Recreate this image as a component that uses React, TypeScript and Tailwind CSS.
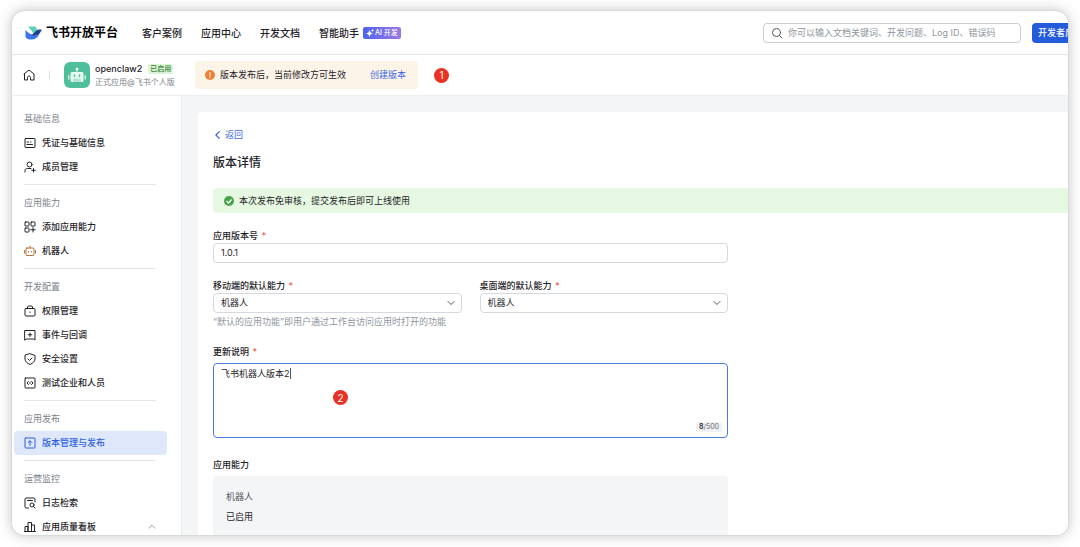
import type { ReactNode } from 'react';

type MenuItem = { label: string; icon: ReactNode; active?: boolean; expandable?: boolean };
type MenuGroup = { title: string; items: MenuItem[] };

function Icon({ children, className = '' }: { children: ReactNode; className?: string }) {
  return (
    <svg
      viewBox="0 0 24 24"
      fill="none"
      stroke="currentColor"
      strokeWidth="2"
      strokeLinecap="round"
      strokeLinejoin="round"
      aria-hidden="true"
      className={`size-3 shrink-0 ${className}`}
    >
      {children}
    </svg>
  );
}

const menu: MenuGroup[] = [
  {
    title: '基础信息',
    items: [
      { label: '凭证与基础信息', icon: <Icon><rect x="2" y="3" width="20" height="18" rx="1" /><path d="M6 10h3M6 15h11M13 10h1" /></Icon> },
      { label: '成员管理', icon: <Icon><circle cx="11" cy="7" r="5" /><path d="M2 22v-3c0-3 2-4 5-4h7M19 15v7M15.500 18.500h7" /></Icon> },
    ],
  },
  {
    title: '应用能力',
    items: [
      { label: '添加应用能力', icon: <Icon><rect x="2" y="2" width="8" height="8" rx="1" /><rect x="14" y="2" width="8" height="8" rx="1" /><rect x="2" y="14" width="8" height="8" rx="1" /><path d="M18 13v9M13.500 17.500h9" /></Icon> },
      { label: '机器人', icon: <Icon className="text-[#b4713a]"><rect x="4" y="6" width="16" height="15" rx="2" /><path d="M12 2v4M1 11v5M23 11v5M9 13v1M15 13v1" /></Icon> },
    ],
  },
  {
    title: '开发配置',
    items: [
      { label: '权限管理', icon: <Icon><rect x="2" y="7" width="20" height="15" rx="2" /><path d="M7 7V4c0-1 1-2 2-2h6c1 0 2 1 2 2v3M12 14v1" /></Icon> },
      { label: '事件与回调', icon: <Icon><path d="M2 3h20v19l-3-2H5l-3 2zM12 8v7M8.500 11.500h7" /></Icon> },
      { label: '安全设置', icon: <Icon><path d="M12 1.500l10 3.500v7c0 5-4 8-10 11C6 20 2 17 2 12V5zM8 12l3 3 5-5" /></Icon> },
      { label: '测试企业和人员', icon: <Icon><rect x="2" y="2" width="20" height="20" rx="1" /><path d="M9 9l-3 3 3 3M15 9l3 3-3 3M12 11v2" /></Icon> },
    ],
  },
  {
    title: '应用发布',
    items: [
      { label: '版本管理与发布', active: true, icon: <Icon><rect x="2" y="2" width="20" height="20" rx="1" /><path d="M12 17V8M8.500 11L12 7.500l3.500 3.500" /></Icon> },
    ],
  },
  {
    title: '运营监控',
    items: [
      { label: '日志检索', icon: <Icon><path d="M9 22H4c-1 0-2-1-2-2V4c0-1 1-2 2-2h16c1 0 2 1 2 2v6M7 7h10" /><circle cx="16" cy="16" r="4" /><path d="M19 19l3 3" /></Icon> },
      { label: '应用质量看板', expandable: true, icon: <Icon><path d="M2 21V11h6v10M8 21V3h7v18M15 21V8h6v13M1 21h22" /></Icon> },
    ],
  },
];

function Logo() {
  return (
    <svg viewBox="0 0 34 28" className="h-[14px] w-[17px] shrink-0" aria-hidden="true">
      <path d="M6 1h14c3 2 5 6 5 10l-8 5C14 10 10 5 6 1z" fill="#5fcfb8" />
      <path d="M1 8c6 7 13 11 21 11 3 0 5-2 7-4-3 8-8 12-16 12C8 27 3 26 1 22z" fill="#3f74f2" />
      <path d="M34 8c-7-2-11 0-14 4-3 3-5 5-8 6 8 3 14 1 17-3 2-3 3-5 5-7z" fill="#1c3f96" />
    </svg>
  );
}

function BotAvatar() {
  return (
    <div className="flex size-[26px] shrink-0 items-center justify-center rounded-md bg-[#4fbf9b]">
      <svg viewBox="0 0 36 34" className="h-[17px] w-[18px]" aria-hidden="true">
        <path d="M18 10V5" stroke="#e9faf3" strokeWidth="2" />
        <circle cx="18" cy="4" r="3" fill="#e9faf3" />
        <rect x="5" y="10" width="26" height="20" rx="3" fill="#e9faf3" />
        <path d="M1.500 17v7M34.500 17v7" stroke="#e9faf3" strokeWidth="2.500" strokeLinecap="round" />
        <path d="M13 16v3M23 16v3" stroke="#4fbf9b" strokeWidth="3" strokeLinecap="round" />
        <rect x="10" y="23" width="16" height="7" fill="#b5e6d5" />
      </svg>
    </div>
  );
}

function Step({ n, className = '' }: { n: number; className?: string }) {
  return (
    <span className={`flex size-[15px] items-center justify-center rounded-full bg-[#e93223] text-[10px] leading-none text-white ${className}`}>
      {n}
    </span>
  );
}

function Label({ htmlFor, children }: { htmlFor: string; children: ReactNode }) {
  return (
    <label htmlFor={htmlFor} className="block h-[14px] font-medium">
      {children} <span className="ml-px text-[#f0574c]">*</span>
    </label>
  );
}

function SelectField({ id, label }: { id: string; label: string }) {
  return (
    <div>
      <Label htmlFor={id}>{label}</Label>
      <div className="relative">
        <select id={id} className="block h-5 w-full appearance-none rounded border border-[#d5d8dc] bg-white px-[7px] leading-[14px] outline-none">
          <option>机器人</option>
        </select>
        <Icon className="pointer-events-none absolute top-1 right-[5px] text-[#51565d]"><path d="M6 9l6 6 6-6" /></Icon>
      </div>
    </div>
  );
}

function Header() {
  return (
    <header className="flex h-11 shrink-0 items-center border-b border-[#e3e5e8] pt-px pl-[13px]">
      <a href="#" className="flex w-[117px] shrink-0 items-center gap-1 text-[12px] font-bold whitespace-nowrap text-black">
        <Logo />
        飞书开放平台
      </a>
      <nav className="flex shrink-0 items-center gap-[19px] text-[10px] font-medium whitespace-nowrap">
        <a href="#">客户案例</a>
        <a href="#">应用中心</a>
        <a href="#">开发文档</a>
        <a href="#" className="flex items-center gap-1">
          智能助手
          <span className="flex h-3 items-center gap-px rounded-[2px] bg-linear-to-r from-[#4c62f0] to-[#9a78e0] px-[3px] text-[7px] text-white">
            <svg viewBox="0 0 16 16" className="size-2" fill="currentColor" aria-hidden="true">
              <path d="M7 2l2 5 5 2-5 2-2 5-2-5-5-2 5-2zM13 0l1 2 2 1-2 1-1 2-1-2-2-1 2-1z" />
            </svg>
            AI 开发
          </span>
        </a>
      </nav>
      <div className="-mr-[21px] ml-auto flex h-5 shrink-0 gap-[11px]">
        <label className="flex w-[258px] items-center gap-[5px] rounded border border-[#c9cdd2] px-[7px]">
          <Icon className="text-[#51565d]"><circle cx="11" cy="11" r="8" /><path d="M17 17l5 5" /></Icon>
          <input
            type="search"
            aria-label="搜索"
            placeholder="你可以输入文档关键词、开发问题、Log ID、错误码"
            className="min-w-0 flex-1 bg-transparent outline-none placeholder:text-[#8f959e]"
          />
        </label>
        <button type="button" className="rounded bg-[#245bdb] px-[6px] font-medium whitespace-nowrap text-white">
          开发者后台
        </button>
      </div>
    </header>
  );
}

function AppBar() {
  return (
    <div className="flex h-[41px] shrink-0 items-center border-b border-[#eceef0] pl-[11px] whitespace-nowrap">
      <a href="#" aria-label="首页">
        <Icon><path d="M2 10L12 2l10 8v12h-7v-5c0-4-6-4-6 0v5H3V10" /></Icon>
      </a>
      <span className="mx-[14px] h-2 w-px bg-[#dee0e3]" />
      <BotAvatar />
      <div className="ml-[5px] w-[100px]">
        <div className="flex h-[13px] items-center gap-[6px]">
          <span className="text-[9px] font-medium">openclaw2</span>
          <span className="rounded-[2px] bg-[#dbf3d6] px-[2px] text-[7px] leading-[10px] font-medium text-[#39873a]">已启用</span>
        </div>
        <div className="h-[13px] text-[8px] leading-[14px] text-[#7c828b]">正式应用@飞书个人版</div>
      </div>
      <div role="status" className="flex h-7 items-center rounded bg-[#fdf4e8] px-[10px]">
        <svg viewBox="0 0 20 20" className="mr-[5px] size-[10px]" aria-hidden="true">
          <circle cx="10" cy="10" r="10" fill="#ee8135" />
          <path d="M10 5v6M10 14v1" stroke="#fff" strokeWidth="2" strokeLinecap="round" />
        </svg>
        版本发布后，当前修改方可生效
        <a href="#" className="mr-[2px] ml-6 text-[#3b69dd]">创建版本</a>
      </div>
      <Step n={1} className="ml-4" />
    </div>
  );
}

function Sidebar() {
  return (
    <nav className="w-[170px] shrink-0 border-r border-[#eaecee] pt-[11px] pr-[14px] pl-[2px]">
      {menu.map((group) => (
        <section key={group.title} className="group">
          <h2 className="flex h-6 items-center pl-[10px] text-[#7c828b]">{group.title}</h2>
          <ul>
            {group.items.map((item) => (
              <li key={item.label}>
                <a
                  href="#"
                  aria-current={item.active ? 'page' : undefined}
                  className={`flex h-6 items-center gap-[6px] rounded px-[10px] font-medium ${item.active ? 'bg-[#dfe7fb] text-[#2d5fdc]' : ''}`}
                >
                  {item.icon}
                  {item.label}
                  {item.expandable && <Icon className="ml-auto size-[10px] text-[#7c828b]"><path d="M5 15l7-7 7 7" /></Icon>}
                </a>
              </li>
            ))}
          </ul>
          <hr className="mt-[5px] mr-[11px] mb-[6px] ml-[10px] border-[#e3e5e8] group-last:hidden" />
        </section>
      ))}
    </nav>
  );
}

function VersionForm() {
  return (
    <form className="w-[515px] max-w-full pt-4">
      <div>
        <Label htmlFor="version">应用版本号</Label>
        <input id="version" defaultValue="1.0.1" className="block h-5 w-full rounded border border-[#d5d8dc] px-[7px] pb-px outline-none" />
      </div>

      <div className="mt-4 grid grid-cols-2 gap-[18px]">
        <SelectField id="mobile" label="移动端的默认能力" />
        <SelectField id="desktop" label="桌面端的默认能力" />
      </div>
      <p className="mt-[2px] h-[14px] text-[#8f959e]">“默认的应用功能”即用户通过工作台访问应用时打开的功能</p>

      <div className="mt-4">
        <Label htmlFor="notes">更新说明</Label>
        <div className="relative mt-1">
          <textarea
            id="notes"
            defaultValue="飞书机器人版本2"
            className="block h-[75px] w-full resize-none rounded border border-[#4e7be0] px-[7px] py-[3px] leading-[14px] outline-none"
          />
          <span className="absolute top-[5px] left-[77px] h-[11px] w-px bg-[#51565d]" />
          <span className="absolute right-[6px] bottom-[6px] rounded-[2px] bg-[#f0f1f2] px-[3px] text-[7px] leading-[10px] text-[#646a73]">
            <b className="font-semibold text-[#1f2329]">8</b>/500
          </span>
          <Step n={2} className="absolute top-[27px] left-[120px]" />
        </div>
      </div>

      <h2 className="mt-5 h-[14px] font-medium">应用能力</h2>
      <dl className="mt-1 rounded bg-[#f4f5f6] px-[13px] pt-[11px] pb-5 leading-5">
        <dt className="text-[#51565d]">机器人</dt>
        <dd>已启用</dd>
      </dl>
    </form>
  );
}

export default function App() {
  return (
    <div className="h-screen overflow-hidden bg-white px-3 pt-[11px] pb-3 font-['Inter','Noto_Sans_CJK_SC',sans-serif] text-[9px] leading-[14px] text-[#1f2329]">
      <div className="flex h-full flex-col overflow-hidden rounded-xl bg-white shadow-[0_0_1px_rgba(0,0,0,0.3),0_0_14px_rgba(0,0,0,0.26)]">
        <Header />
        <AppBar />
        <div className="flex min-h-0 flex-1">
          <Sidebar />
          <main className="min-w-0 flex-1 bg-[#f3f5f6] pt-4 pl-4">
            <div className="h-full rounded-tl bg-white pt-4 pl-[15px]">
              <a href="#" className="flex h-[14px] w-fit items-center text-[#3b69dd]">
                <Icon className="size-[10px]"><path d="M15 4l-8 8 8 8" strokeWidth="3" /></Icon>
                <span className="ml-[2px]">返回</span>
              </a>
              <h1 className="mt-3 text-[12px] leading-[18px] font-medium">版本详情</h1>
              <div className="mt-4 flex h-[25px] items-center gap-[5px] rounded-l bg-[#e6f8e2] pl-[11px]">
                <svg viewBox="0 0 20 20" className="size-[10px]" fill="none" aria-hidden="true">
                  <circle cx="10" cy="10" r="10" fill="#47a34b" />
                  <path d="M5 10l4 4 6-7" stroke="#fff" strokeWidth="2.500" />
                </svg>
                本次发布免审核，提交发布后即可上线使用
              </div>
              <VersionForm />
            </div>
          </main>
        </div>
      </div>
    </div>
  );
}
